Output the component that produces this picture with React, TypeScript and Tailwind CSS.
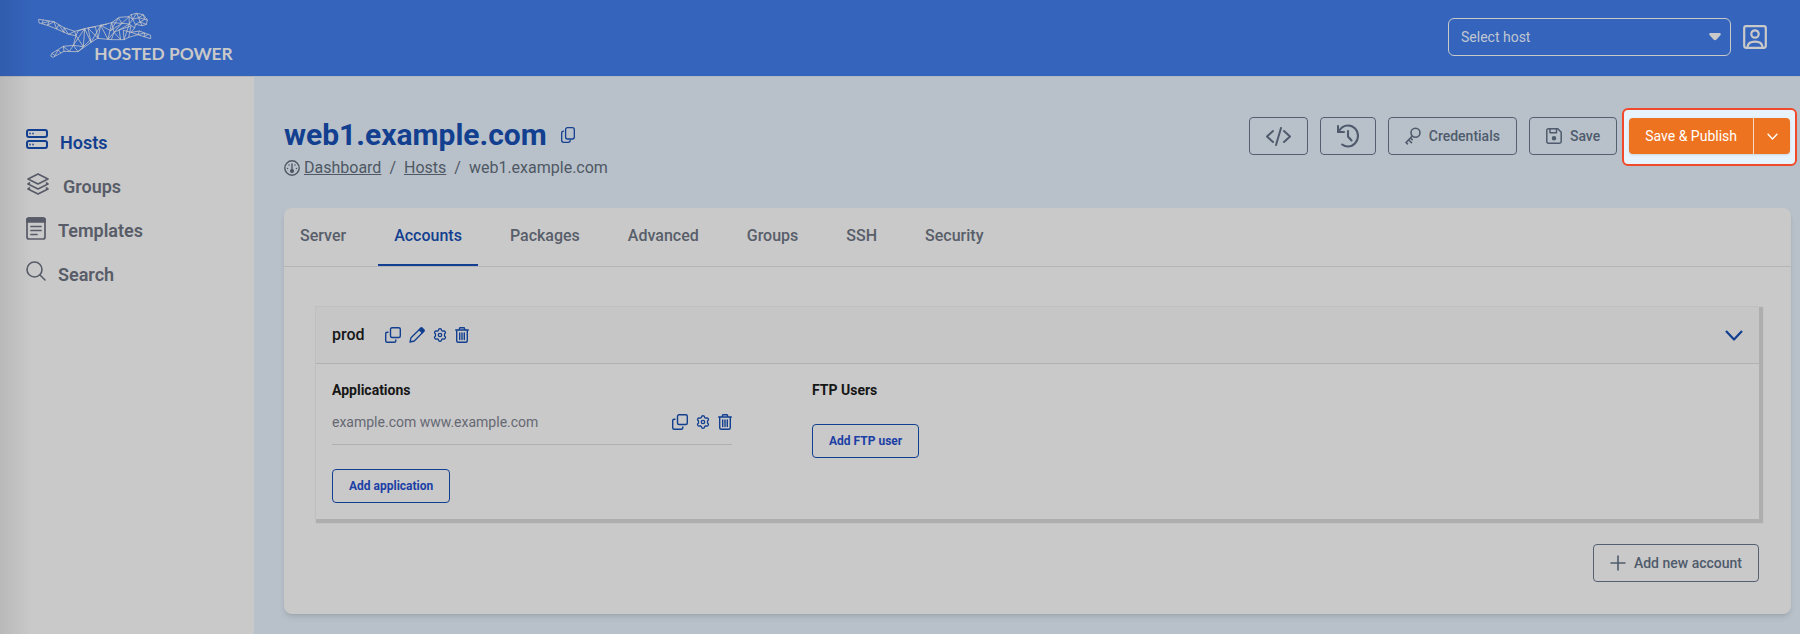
import type { ReactNode } from "react";

type IconProps = { className?: string };

function Svg({ className = "size-5", box = "0 0 24 24", width = 1.8, children }: { className?: string; box?: string; width?: number; children: ReactNode }) {
  return (
    <svg className={className} viewBox={box} fill="none" stroke="currentColor" strokeWidth={width} strokeLinecap="round" strokeLinejoin="round" aria-hidden="true">
      {children}
    </svg>
  );
}

const Logo = () => (
  <svg className="h-[52px] w-[204px] text-[#c9c9c9]" viewBox="106 33 612 156" role="img" aria-label="Hosted Power">
    <g fill="none" stroke="currentColor" strokeWidth="2.3" strokeLinejoin="round" strokeLinecap="round">
      <path d="M115 58 128 60 160 65 190 83 222 94 252 86 300 76 333 68 355 52 385 50 391 44 408 40 428 44 440 60 437 73 425 77 404 73 402 84 391 97 416 93 432 99 450 106 450 116 430 110 412 104 384 112 370 119 332 119 290 115 271 127 232 155 190 154 157 172 150 168 154 160 188 139 218 136 226 107 204 103 168 87 140 76 116 69Z" />
      <path d="M128 60 124 70 146 64 140 76 160 65 168 87 174 74 190 97 190 83 204 103 222 94 226 107 232 93 252 86 248 140 218 136 252 86 271 127 262 84 292 115 300 76 271 127M262 84 284 80 292 115M226 107 248 140 232 155 218 136M248 140 271 118M188 139 206 154 218 136M188 139 190 154M154 160 163 167 172 150 180 158" />
      <path d="M300 76 322 118 333 68 340 97 322 118M300 76 330 92 353 54 364 70 330 92M333 68 364 70 385 50 386 72 364 70 340 97 360 119 355 90 386 72 370 119 368 91 391 97M355 90 340 97 332 119M386 72 402 84M355 90 391 78 384 112M300 76 318 73" />
      <path d="M385 50 396 58 408 40 414 53 396 58 391 44M414 53 428 44 432 58 414 53 418 66 432 58 440 60M418 66 437 73M418 66 404 73 396 58 386 72M418 66 425 77M391 97 412 104 416 93M412 104 432 99 430 110 442 103" />
    </g>
    <text x="281" y="179" fill="currentColor" fontFamily="Lato, sans-serif" fontWeight="700" fontSize="52">HOSTED POWER</text>
  </svg>
);

const HostsIcon = () => (
  <Svg className="h-5 w-[22px]" box="0 0 22 20" width={2}>
    <rect x="1" y="1" width="20" height="7" rx="2" /><rect x="1" y="12" width="20" height="7" rx="2" />
    <path d="M4 4.300v.4M7 4.300v.4M4 15.300v.4M7 15.300v.4" strokeWidth="1.500" />
  </Svg>
);
const LayersIcon = () => (
  <Svg className="h-[22px] w-6" box="0 0 24 22" width={1.7}>
    <path d="m12 1 10 5-10 5L2 6ZM3.5 10 2 11l10 5 10-5-1.500-1M3.500 15 2 16l10 5 10-5-1.500-1" />
  </Svg>
);
const TemplateIcon = () => (
  <Svg className="h-[23px] w-5" box="0 0 20 23" width={1.7}>
    <rect x="1" y="1" width="18" height="21" rx="2" /><path d="M1 5V3q0-2 2-2h14q2 0 2 2v2Z" fill="currentColor" />
    <path d="M5 9.500h10M5 13.500h10M5 17.500h6" />
  </Svg>
);
const SearchIcon = () => (
  <Svg className="size-5" box="0 0 20 20" width={1.6}><circle cx="8.500" cy="8.500" r="7.500" /><path d="m13.800 13.800 5.200 5.200" /></Svg>
);
const CopyIcon = () => (
  <Svg className="h-4 w-[14px]" box="0 0 14 16" width={1.3}>
    <rect x="4.600" y=".7" width="8.700" height="11.300" rx="2" /><path d="M2.500 4.200C1.300 4.200.7 5 .7 6.200v7c0 1.200.8 2.100 2 2.100h4.500c1.200 0 2-.8 2-2" />
  </Svg>
);
const DashIcon = () => (
  <Svg className="size-4" box="0 0 16 16" width={1.4}>
    <circle cx="8" cy="8" r="7.200" /><circle cx="8" cy="11" r="1.400" fill="currentColor" /><path d="M8 4v7M3.500 8.500h.1M12.400 8.500h.1M5 5h.1M11 5h.1" />
  </Svg>
);
const AccountIcon = () => (
  <Svg className="size-6" width={2.200}>
    <rect x="1.200" y="1.200" width="21.600" height="21.600" rx="2" /><circle cx="12" cy="9" r="3.700" /><path d="M4.500 22c.3-3.500 3.300-5.400 7.500-5.400s7.200 1.900 7.500 5.400" />
  </Svg>
);
const CodeIcon = () => (
  <Svg className="h-[19px] w-[25px]" box="0 0 25 19" width={2}><path d="m7 4-6 5.500L7 15M18 4l6 5.500-6 5.500M15 1l-5 17" /></Svg>
);
const HistoryIcon = () => (
  <Svg className="h-6 w-[22px]" box="0 0 22 24" width={2.1}><path d="M1 2v6h6M1.500 8C3.500 4 7 1.500 11 1.500c5.700 0 10 4.700 10 10.300S16.700 22.500 11 22.500c-2.300 0-4.200-.7-5.800-2M11 7v5.500l3.500 4" /></Svg>
);
const KeyIcon = () => (
  <Svg className="h-[18px] w-4" box="0 0 16 18" width={1.600}><circle cx="10.500" cy="5.700" r="4.500" /><path d="M7.300 9 1 15.500l1.500 1.300M3.500 13l3 2.600M5.500 11l1.700 1.600" /></Svg>
);
const SaveIcon = () => (
  <Svg className="size-4" box="0 0 16 16" width={1.500}>
    <path d="M2.500.8h9.300l3.400 3.400v9.300q0 1.700-1.700 1.700h-11q-1.700 0-1.700-1.700v-11Q.8.8 2.500.8ZM4 1v3.800h6.500V1" /><circle cx="8" cy="10.300" r="1.500" fill="currentColor" />
  </Svg>
);
const CloneIcon = () => (
  <Svg className="size-4" box="0 0 16 16" width={1.400}>
    <rect x="5.500" y=".7" width="9.800" height="9.800" rx="1.500" /><path d="M3 5.200h-.8Q.7 5.200.7 6.700v7.100q0 1.500 1.500 1.500h7.100q1.500 0 1.500-1.500V13" />
  </Svg>
);
const PenIcon = () => (
  <Svg className="size-4" box="0 0 16 16" width={1.300}>
    <path d="m1 15 1-4.300L11.700 1.200q.8-.8 1.600 0l1.500 1.500q.8.800 0 1.600L5.300 14 1 15Z" /><path d="m10.300 2.800 1.900-1.700 2.700 2.700-1.700 1.900Z" fill="currentColor" />
  </Svg>
);
const GearIcon = () => (
  <Svg className="size-[14px]" box="0 0 14 14" width={1.300}>
    <path d="m5.300 2.600.5-1.500q1.200-.7 2.400 0l.5 1.500 1 .6 1.600-.4q1.200.5 1.200 2l-1 1.200v2l1 1.200q0 1.500-1.200 2l-1.600-.4-1 .6-.5 1.500q-1.200.7-2.400 0l-.5-1.500-1-.6-1.600.4q-1.200-.5-1.200-2l1-1.200V6l-1-1.200q0-1.500 1.200-2l1.600.4Z" /><circle cx="7" cy="7" r="1.700" />
  </Svg>
);
const TrashIcon = () => (
  <Svg className="h-4 w-[14px]" box="0 0 14 16" width={1.400}>
    <path d="M.7 3h12.600M4 3l.8-2.200h4.400L10 3M1.700 3v10.800q0 1.500 1.500 1.500h7.600q1.500 0 1.500-1.500V3M4.700 6v6.500M7 6v6.500M9.300 6v6.500" />
  </Svg>
);
const Chevron = ({ className }: IconProps) => (
  <Svg className={className} box="0 0 18 11" width={2.2}><path d="m1 1 8 8.500L17 1" strokeLinecap="butt" /></Svg>
);

const nav = [
  { label: "Hosts", icon: <HostsIcon />, style: "gap-3 text-[#123f8f]" },
  { label: "Groups", icon: <LayersIcon />, style: "gap-[13px] text-[#585c68]" },
  { label: "Templates", icon: <TemplateIcon />, style: "gap-3 text-[#585c68]" },
  { label: "Search", icon: <SearchIcon />, style: "gap-3 text-[#585c68]" },
];
const tabs = ["Server", "Accounts", "Packages", "Advanced", "Groups", "SSH", "Security"];

function IconButton({ label, children }: { label: string; children: ReactNode }) {
  return <button type="button" aria-label={label} className="flex h-4 items-center">{children}</button>;
}

function OutlineButton({ label, icon, hideLabel }: { label: string; icon: ReactNode; hideLabel?: boolean }) {
  return (
    <button type="button" aria-label={label} className="flex h-[38px] items-center gap-2 rounded border border-[#555f72] px-4 text-sm font-medium text-[#4f5b6c]">
      {icon}
      {!hideLabel && <span>{label}</span>}
    </button>
  );
}

function SmallButton({ children }: { children: ReactNode }) {
  return <button type="button" className="h-[34px] rounded border border-[#123f8f] px-4 text-xs font-bold text-[#1b3fa5]">{children}</button>;
}

export default function App() {
  return (
    <div className="relative flex min-h-screen flex-col bg-[#b8c1ca] font-[Roboto,sans-serif] text-[#4f5864]">
      <header className="flex h-[76px] items-center justify-between bg-[#3564bc] pr-[33px] pb-0.5 pl-9">
        <Logo />
        <div className="flex items-center gap-3">
          <div className="relative">
            <select aria-label="Select host" className="h-[38px] w-[283px] appearance-none rounded-md border border-[#c9c9c9] bg-transparent px-3 text-sm text-[#c0c7d2]">
              <option>Select host</option>
            </select>
            <svg className="pointer-events-none absolute top-[15px] right-[10px] h-2 w-3 text-[#c9c9c9]" viewBox="0 0 12 8" fill="currentColor" aria-hidden="true">
              <path d="M1.200 0h9.600q1.200.3 1 1.700L7.500 6.500Q6 8 4.500 6.500L.2 1.700Q0 .3 1.200 0Z" />
            </svg>
          </div>
          <button type="button" aria-label="Account" className="text-[#c9c9c9]"><AccountIcon /></button>
        </div>
      </header>

      <div className="flex grow">
        <aside className="w-[254px] shrink-0 border-t border-[#b4b6b9] bg-[#c9c9c9]">
          <nav className="flex flex-col pt-[42px] pl-[26px]">
            {nav.map((n) => (
              <a key={n.label} href="#" className={`flex h-11 items-start pt-2.5 text-lg leading-[27px] font-semibold ${n.style}`}>
                {n.icon}
                <span>{n.label}</span>
              </a>
            ))}
          </nav>
        </aside>

        <main className="min-w-0 grow border-t border-[#b0b8c4] pr-[9px] pb-[19px] pl-[30px]">
          <div className="flex items-start justify-between pt-10">
            <div>
              <div className="flex items-center gap-3.5">
                <h1 className="text-3xl leading-9 font-bold text-[#123f8f]">web1.example.com</h1>
                <button type="button" aria-label="Copy host name" className="text-[#123f8f]"><CopyIcon /></button>
              </div>
              <nav aria-label="Breadcrumb" className="mt-[3px] flex h-6 items-center gap-2 text-base">
                <span className="flex items-center gap-1"><DashIcon /><a href="#" className="underline">Dashboard</a></span>
                <span>/</span>
                <a href="#" className="underline">Hosts</a>
                <span>/</span>
                <span>web1.example.com</span>
              </nav>
            </div>
            <div className="mr-px flex items-center gap-3">
              <OutlineButton label="Code" icon={<CodeIcon />} hideLabel />
              <OutlineButton label="History" icon={<HistoryIcon />} hideLabel />
              <OutlineButton label="Credentials" icon={<KeyIcon />} />
              <OutlineButton label="Save" icon={<SaveIcon />} />
              <div className="relative">
                <div className="absolute -inset-x-[7px] -top-2.5 -bottom-3 rounded-md border-2 border-[#f2492a] bg-[#e8f4fd]" />
                <div className="relative flex h-9 rounded bg-[#ee7321] text-sm text-white shadow">
                  <button type="button" className="border-r border-[#f6d9c6] px-4">Save &amp; Publish</button>
                  <button type="button" aria-label="More publish options" className="flex w-9 items-center justify-center"><Chevron className="h-[7px] w-[11px]" /></button>
                </div>
              </div>
            </div>
          </div>

          <section className="mt-7 rounded-lg bg-[#c9c9c9] pb-8 shadow-md">
            <div role="tablist" className="flex gap-4 border-b border-[#b3b5b7]">
              {tabs.map((t) => (
                <button
                  key={t}
                  type="button"
                  role="tab"
                  aria-selected={t === "Accounts"}
                  className={`border-b-2 px-4 py-4 text-base font-medium ${t === "Accounts" ? "border-[#123f8f] text-[#123f8f]" : "border-transparent text-[#585e69]"}`}
                >
                  {t}
                </button>
              ))}
            </div>

            <div className="px-8 pt-10">
              <article className="shadow-[-1px_-1px_0_#bfbfbf,2px_2px_1px_2px_#aeaeae]">
                <div className="flex h-[57px] items-center justify-between border-b border-[#b1b1b1] bg-[#c6c6c6] pr-4 pl-4">
                  <div className="flex items-center gap-5">
                    <h2 className="text-base font-medium text-[#161616]">prod</h2>
                    <div className="flex items-center gap-2 text-[#123f8f]">
                      <IconButton label="Clone account"><CloneIcon /></IconButton>
                      <IconButton label="Edit account"><PenIcon /></IconButton>
                      <IconButton label="Account settings"><GearIcon /></IconButton>
                      <IconButton label="Delete account"><TrashIcon /></IconButton>
                    </div>
                  </div>
                  <button type="button" aria-label="Collapse" className="text-[#123f8f]"><Chevron className="h-[11px] w-[18px]" /></button>
                </div>
                <div className="flex gap-20 bg-[#c9c9c9] px-4 pt-4 pb-4">
                  <div className="w-[400px]">
                    <h3 className="text-sm font-bold text-[#161616]">Applications</h3>
                    <div className="mt-1 flex h-[41px] items-center justify-between border-b border-[#b1b1b1] pb-1 text-sm text-[#666873]">
                      <span>example.com www.example.com</span>
                      <div className="flex items-center gap-2 text-[#123f8f]">
                        <IconButton label="Clone application"><CloneIcon /></IconButton>
                        <IconButton label="Application settings"><GearIcon /></IconButton>
                        <IconButton label="Delete application"><TrashIcon /></IconButton>
                      </div>
                    </div>
                    <div className="mt-6"><SmallButton>Add application</SmallButton></div>
                  </div>
                  <div>
                    <h3 className="text-sm font-bold text-[#161616]">FTP Users</h3>
                    <div className="mt-6"><SmallButton>Add FTP user</SmallButton></div>
                  </div>
                </div>
              </article>
              <div className="mt-[25px] flex justify-end">
                <OutlineButton label="Add new account" icon={<Svg className="size-4" box="0 0 16 16" width={1.600}><path d="M8 .5v15M.5 8h15" strokeLinecap="butt" /></Svg>} />
              </div>
            </div>
          </section>
        </main>
      </div>
      <div className="pointer-events-none absolute inset-y-0 left-0 w-8 bg-linear-to-r from-black/8 to-transparent" />
    </div>
  );
}
